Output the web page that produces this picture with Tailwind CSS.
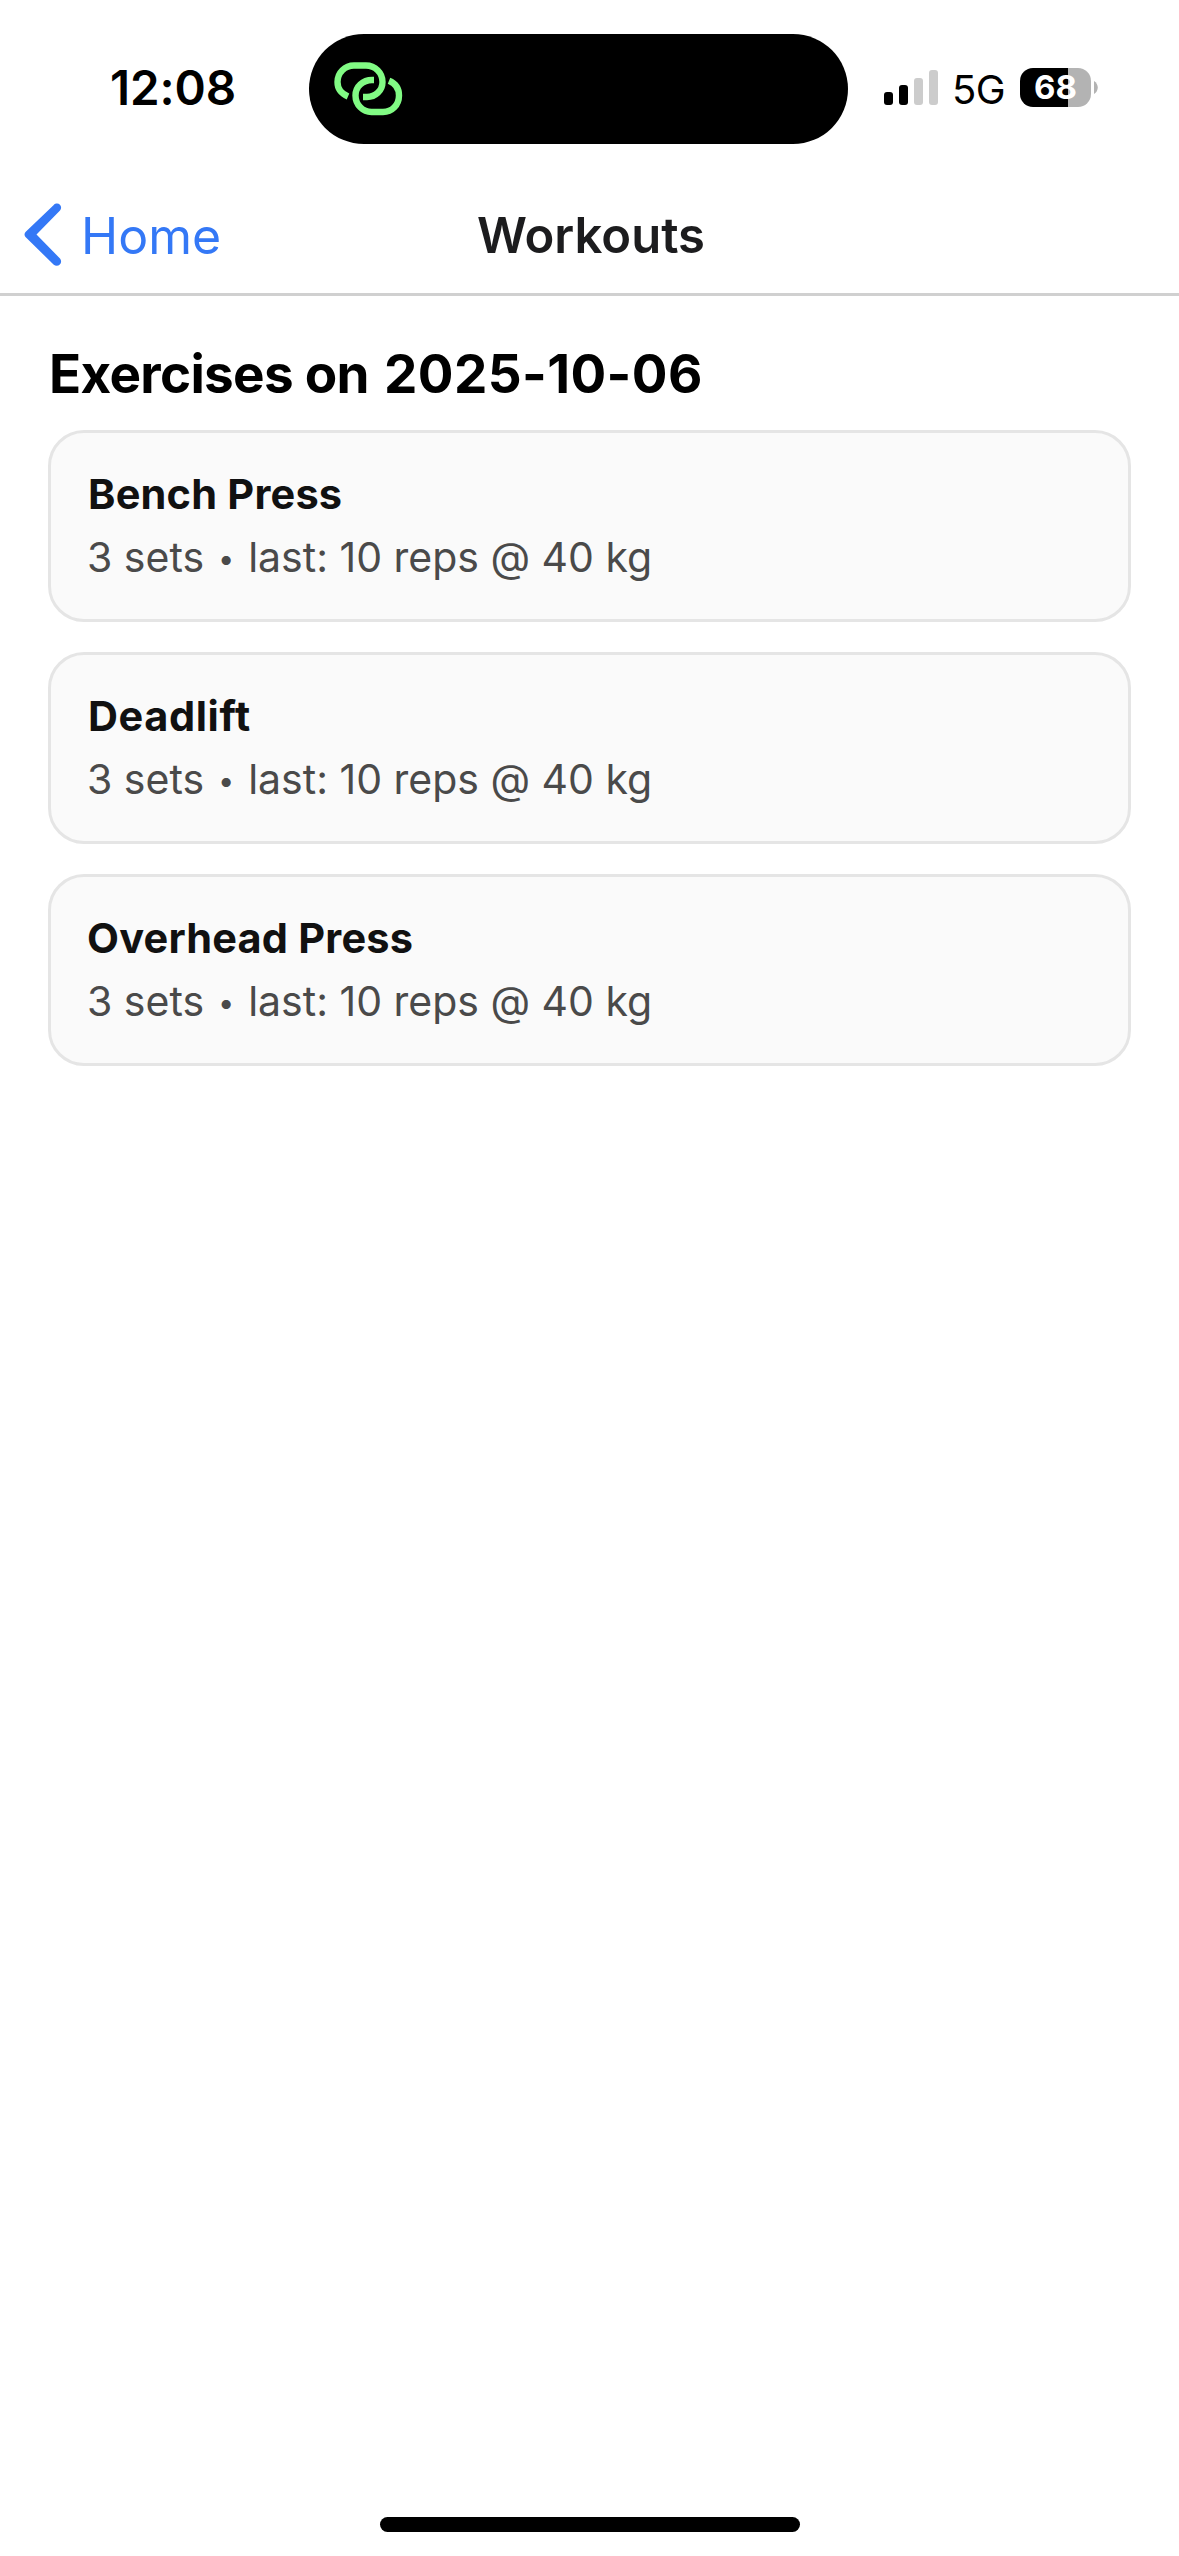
<!DOCTYPE html>
<html lang="en">
<head>
<meta charset="utf-8">
<title>Workouts</title>
<script src="https://cdn.jsdelivr.net/npm/@tailwindcss/browser@4"></script>
</head>
<body class="flex h-[2556px] w-[1179px] flex-col overflow-hidden bg-white font-['Inter',sans-serif] text-black">
  <div class="flex h-[177px] shrink-0 items-start">
    <div class="w-[309px] pt-[58px] pl-[110px] text-[47.5px] leading-[60px] font-semibold tracking-[-0.1px]">12:08</div>
    <div class="mt-[34px] flex h-[110px] w-[539px] items-start rounded-full bg-black pt-[28px] pl-[25px]">
      <svg class="h-[54px] w-[69px]" viewBox="0 0 69 54" fill="none" stroke="#81fb84" stroke-width="6.400">
        <path d="M14 34.500C7 31.500 3.500 26 3.500 20C3.500 10.500 11 3.500 20 3.500H32C41 3.500 48.500 10.500 48.500 20C48.500 28.500 41.500 35 33 35H29"/>
        <path d="M40 18H38C29 18 21.500 24.500 21.500 33.500C21.500 43 29 50 37.500 50H49C58 50 65 43 65 33.500C65 27 61.500 21.500 55 18.800"/>
      </svg>
    </div>
    <div class="flex pl-[36px] pt-[68px]">
      <div class="flex h-[37px] items-end gap-[6px]">
        <div class="h-[13px] w-[9px] rounded-[3px] bg-black"></div>
        <div class="h-[20px] w-[9px] rounded-[3px] bg-black"></div>
        <div class="h-[27px] w-[9px] rounded-[3px] bg-[#cccccc]"></div>
        <div class="h-[35px] w-[9px] rounded-[3px] bg-[#cccccc]"></div>
      </div>
      <div class="ml-[14px] w-[68px] text-[40px] leading-[43px] tracking-[-0.6px]">5G</div>
      <div class="flex h-[39px] w-[71px] items-center justify-center rounded-[13px] bg-[linear-gradient(90deg,#000_48px,#b3b3b3_48px)] text-[33px] leading-[39px] font-bold text-white">68</div>
      <svg class="ml-[3px] mt-[13px] h-[13px] w-[4px]" viewBox="0 0 4 13"><path d="M0 0C5 3 5 10 0 13Z" fill="#b3b3b3"/></svg>
    </div>
  </div>
  <header class="grid h-[119px] shrink-0 grid-cols-3 border-b-[3px] border-[#d0d0d0]">
    <div class="flex items-start pl-[24px] pt-[26px] text-[#3478f6]">
      <svg class="h-[64px] w-[38px]" viewBox="0 0 38 64"><path d="M1.500 29L29.500 2.200C34 -2 39.500 3 36 7.500L12.500 31.500L36 55.500C39.500 60 34 65 29.500 61.500L1.500 34Q-.5 31.500 1.500 29Z" fill="currentColor"/></svg>
      <span class="ml-[19px] text-[50px] leading-[66px]">Home</span>
    </div>
    <h1 class="pt-[26px] pl-[3px] text-center text-[49px] leading-[66px] font-semibold text-[#1c1c1e]">Workouts</h1>
  </header>
  <main class="flex flex-col px-[48px]">
    <h2 class="mt-[45px] flex h-[89px] pl-[1px] text-[53px] leading-[66px] font-bold"><span class="w-[335px] tracking-[-0.7px] whitespace-pre">Exercises on </span><span class="tracking-[0.4px] [font-feature-settings:'calt'_0]">2025-10-06</span></h2>
    <ul class="flex flex-col gap-[30px]">
      <li class="h-[192px] rounded-[36px] border-[3px] border-[#e5e5e5] bg-[#fafafa] px-[36px] pt-[36px]">
        <h3 class="pl-[1px] text-[41.5px] leading-[51px] font-bold tracking-[0.2px] text-[#111]">Bench Press</h3>
        <p class="mt-[12px] text-[41px] leading-[51px] text-[#4a4a4a] [font-feature-settings:'calt'_0]">3 sets <span class="relative -top-[3px] inline-block w-[21px] text-center text-[29px] leading-none">•</span> last: 10 reps @ 40 kg</p>
      </li>
      <li class="h-[192px] rounded-[36px] border-[3px] border-[#e5e5e5] bg-[#fafafa] px-[36px] pt-[36px]">
        <h3 class="pl-[1px] text-[41.5px] leading-[51px] font-bold tracking-[0.6px] text-[#111]">Deadlift</h3>
        <p class="mt-[12px] text-[41px] leading-[51px] text-[#4a4a4a] [font-feature-settings:'calt'_0]">3 sets <span class="relative -top-[3px] inline-block w-[21px] text-center text-[29px] leading-none">•</span> last: 10 reps @ 40 kg</p>
      </li>
      <li class="h-[192px] rounded-[36px] border-[3px] border-[#e5e5e5] bg-[#fafafa] px-[36px] pt-[36px]">
        <h3 class="text-[41.5px] leading-[51px] font-bold tracking-[0.2px] text-[#111]">Overhead Press</h3>
        <p class="mt-[12px] text-[41px] leading-[51px] text-[#4a4a4a] [font-feature-settings:'calt'_0]">3 sets <span class="relative -top-[3px] inline-block w-[21px] text-center text-[29px] leading-none">•</span> last: 10 reps @ 40 kg</p>
      </li>
    </ul>
  </main>
  <div class="mx-auto mt-auto mb-[24px] h-[15px] w-[420px] rounded-full bg-black"></div>
</body>
</html>
